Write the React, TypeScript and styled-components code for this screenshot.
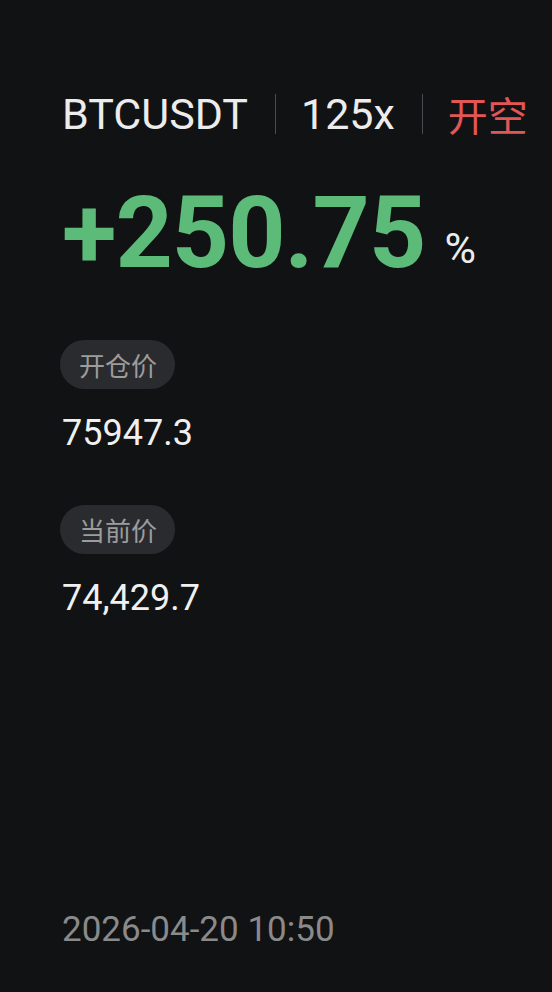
import React from "react";
import styled, { createGlobalStyle } from "styled-components";

const Global = createGlobalStyle`
  html, body { margin: 0; padding: 0; background: #111214; }
  #root { min-height: 100vh; }
`;

const Page = styled.div`
  box-sizing: border-box;
  min-height: 100vh;
  background: #111214;
  padding: 93px 0 45px 62px;
  display: flex;
  flex-direction: column;
  font-family: Roboto, "Noto Sans CJK SC", sans-serif;
  color: #ececec;
`;

const Header = styled.div`
  display: flex;
  align-items: center;
  height: 42px;
  line-height: 42px;
  font-weight: 400;
`;

const HeaderItem = styled.span<{ $accent?: boolean }>`
  color: ${(p) => (p.$accent ? "#e25656" : "#ececec")};
  font-family: ${(p) =>
    p.$accent ? '"Noto Sans CJK SC", sans-serif' : 'Roboto, sans-serif'};
  font-size: ${(p) => (p.$accent ? "40px" : "43px")};
`;

const Divider = styled.span`
  width: 1px;
  height: 40px;
  background: #4a4b4e;
  margin: 0 25px 0 27px;
`;

const Profit = styled.div`
  margin-top: 48px;
  display: flex;
  align-items: baseline;
  line-height: 100px;
  height: 100px;
`;

const ProfitValue = styled.span`
  font-size: 100px;
  font-weight: 700;
  color: #5cbb78;
  letter-spacing: -1px;
`;

const Percent = styled.span`
  font-size: 43px;
  font-weight: 400;
  color: #ececec;
  margin-left: 19px;
  position: relative;
  top: -4px;
`;

const Field = styled.div<{ $gap: number }>`
  margin-top: ${(p) => p.$gap}px;
  display: flex;
  flex-direction: column;
  align-items: flex-start;
`;

const Pill = styled.span`
  display: inline-flex;
  align-items: center;
  height: 49px;
  margin-left: -2px;
  padding: 0 18px 0 19px;
  border-radius: 25px;
  background: #2a2b2e;
  color: #9c9c9c;
  font-family: "Noto Sans CJK SC", sans-serif;
  font-size: 26px;
`;

const Value = styled.div`
  margin-top: 26px;
  font-size: 36px;
  line-height: 36px;
  font-weight: 400;
  color: #f0f0f0;
`;

const DateText = styled.div`
  margin-top: auto;
  font-size: 35px;
  line-height: 35px;
  font-weight: 400;
  color: #8a8a8a;
`;

export default function App() {
  return (
    <>
      <Global />
      <Page>
        <Header>
          <HeaderItem>BTCUSDT</HeaderItem>
          <Divider />
          <HeaderItem>125x</HeaderItem>
          <Divider />
          <HeaderItem $accent>开空</HeaderItem>
        </Header>
        <Profit>
          <ProfitValue>+250.75</ProfitValue>
          <Percent>%</Percent>
        </Profit>
        <Field $gap={57}>
          <Pill>开仓价</Pill>
          <Value>75947.3</Value>
        </Field>
        <Field $gap={54}>
          <Pill>当前价</Pill>
          <Value>74,429.7</Value>
        </Field>
        <DateText>2026-04-20 10:50</DateText>
      </Page>
    </>
  );
}
